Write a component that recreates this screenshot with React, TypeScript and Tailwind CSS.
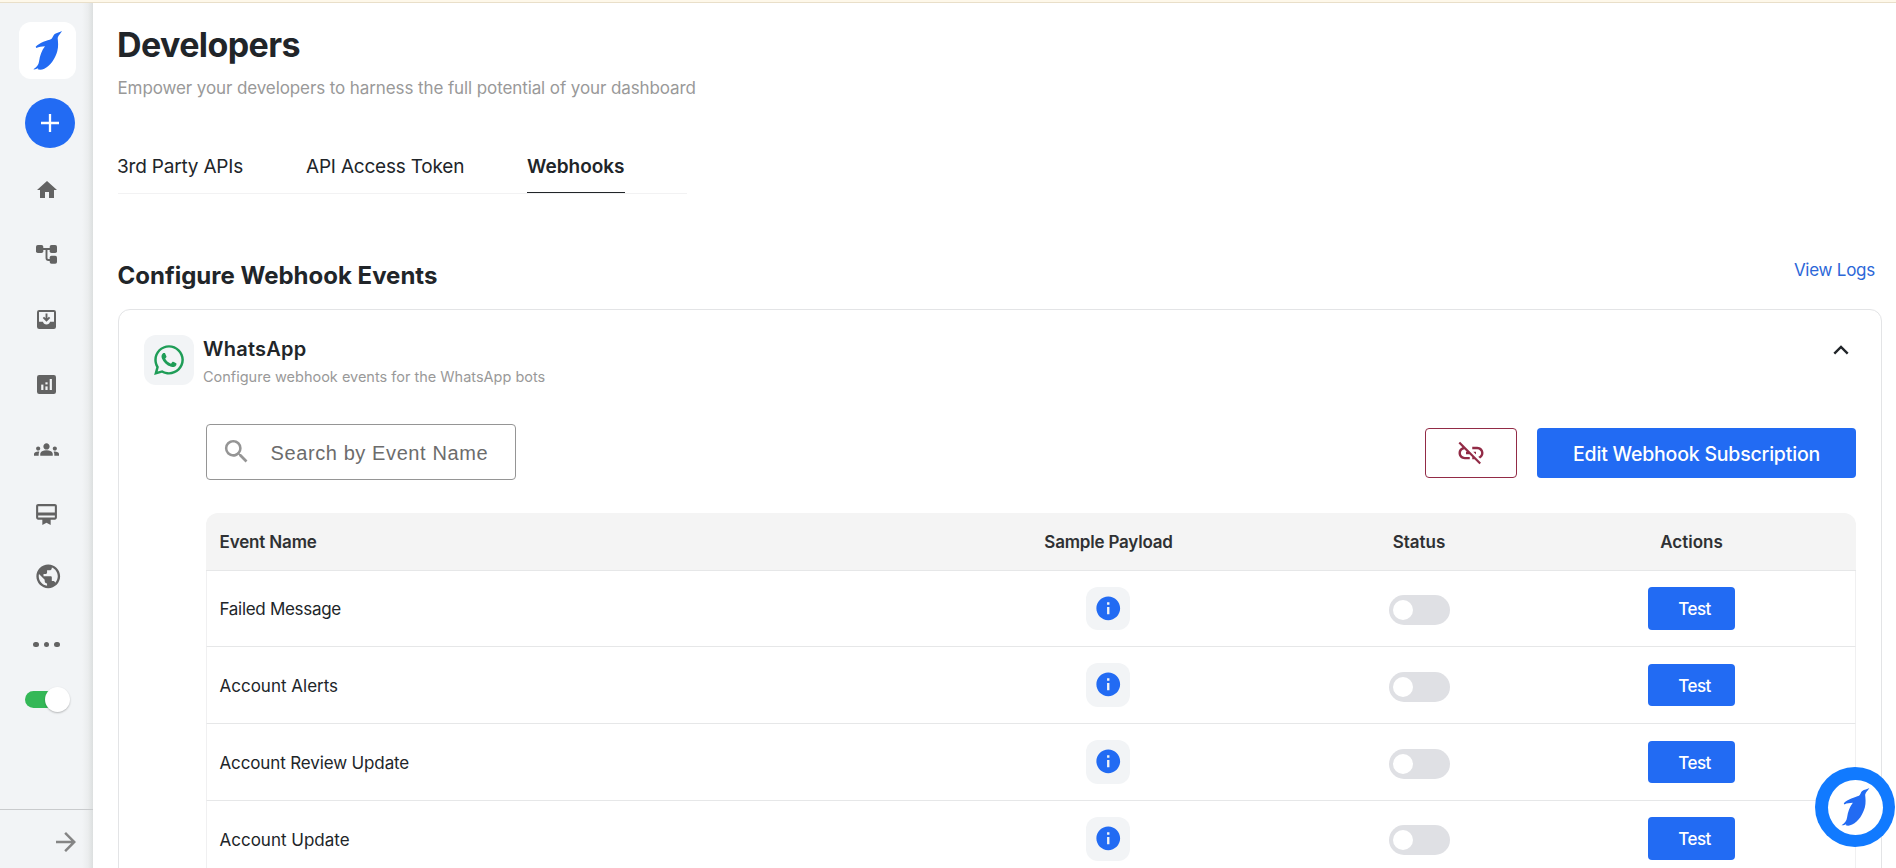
import type { ReactNode } from 'react';
import {
  MdArrowForward,
  MdCardMembership,
  MdGroups,
  MdHome,
  MdInfo,
  MdLinkOff,
  MdPublic,
  MdSearch,
} from 'react-icons/md';
import { FaWhatsapp } from 'react-icons/fa';

function Penguin({ className }: { className: string }) {
  return (
    <svg viewBox="50 36 90 122" className={className} fill="#226bf3" aria-hidden="true">
      <path d="M137 39C131 43 121 44 115 48C110 52 110 59 105 63C93 68 70 73 58 86L60 90C68 86 76 86 86 85C76 98 71 112 68 131C67 141 60 148 51 154C56 155 61 152 66 151L64 154C69 156 77 156 84 152C104 142 117 120 123 99C127 84 125 72 124 60C126 51 133 47 137 39Z" />
    </svg>
  );
}

function TreeIcon() {
  return (
    <svg viewBox="0 0 21 19" className="h-[19px] w-[21px]" fill="#636363" aria-hidden="true">
      <rect x="0" y="0" width="7.3" height="8" rx="1.8" />
      <rect x="13.7" y="0" width="7.3" height="8" rx="1.8" />
      <rect x="13.7" y="10.7" width="7.3" height="8" rx="1.8" />
      <path d="M7 4h7M10.5 4v9q0 2 2 2h1.5" fill="none" stroke="#636363" strokeWidth="1.9" />
    </svg>
  );
}

function InboxIcon() {
  return (
    <svg viewBox="0 0 19 19" className="size-[19px]" aria-hidden="true">
      <rect width="19" height="19" rx="2.2" fill="#636363" />
      <path d="M2 2h15v9.8h-4a3.6 3.6 0 0 1-7 0H2z" fill="#f2f4f6" />
      <path d="M9.5 3.6v6M6.4 7.3l3.1 3.1 3.1-3.1" fill="none" stroke="#636363" strokeWidth="1.9" />
    </svg>
  );
}

function AnalyticsIcon() {
  return (
    <svg viewBox="0 0 19 19" className="size-[19px]" aria-hidden="true">
      <rect width="19" height="19" rx="2.2" fill="#636363" />
      <g fill="#f2f4f6">
        <rect x="4.2" y="9.6" width="2.2" height="5.4" />
        <rect x="8.4" y="7.3" width="2.2" height="2.1" />
        <rect x="8.4" y="11.4" width="2.2" height="3.6" />
        <rect x="12.7" y="4" width="2.2" height="11" />
      </g>
    </svg>
  );
}

function NavItem({ children }: { children: ReactNode }) {
  return <button className="flex h-[65px] w-[93px] items-center justify-center text-[#636363]">{children}</button>;
}

function Sidebar() {
  return (
    <aside className="flex w-[93px] shrink-0 flex-col bg-[#f2f4f6] bg-[linear-gradient(to_right,transparent_82px,#ebedee_88px,#dcdfdf_93px)]">
      <div className="mt-[19px] ml-[19px] flex h-[57px] w-[57px] items-start rounded-xl bg-white pt-2 pl-[13.7px]">
        <Penguin className="h-[40.7px] w-[30px]" />
      </div>
      <button className="mt-[19px] ml-[25px] flex size-[50px] items-center justify-center rounded-full bg-[#226bf3]">
        <svg viewBox="0 0 18 18" className="size-[18px]" aria-hidden="true">
          <path d="M9 0v18M0 9h18" stroke="#fff" strokeWidth="2.3" />
        </svg>
      </button>
      <nav className="mt-[9px] flex flex-col">
        <NavItem><MdHome size={24} /></NavItem>
        <NavItem><TreeIcon /></NavItem>
        <NavItem><InboxIcon /></NavItem>
        <NavItem><AnalyticsIcon /></NavItem>
        <NavItem><MdGroups size={25} /></NavItem>
        <NavItem><MdCardMembership size={25} /></NavItem>
        <button className="flex h-[58px] w-[96px] items-center justify-center text-[#636363]">
          <MdPublic size={28.5} />
        </button>
        <button className="flex h-[79px] w-[93px] items-center justify-center gap-[4.4px]">
          <span className="size-[5.8px] rounded-full bg-[#636363]" />
          <span className="size-[5.8px] rounded-full bg-[#636363]" />
          <span className="size-[5.8px] rounded-full bg-[#636363]" />
        </button>
      </nav>
      <div className="mt-[3px] ml-[25px] flex h-[25px] w-[45px] items-center">
        <span className="h-[17px] w-[30px] shrink-0 rounded-full bg-[#34b857]" />
        <span className="-ml-[10px] size-[25px] shrink-0 rounded-full bg-white shadow-[0_1px_2px_rgba(0,0,0,0.25)]" />
      </div>
      <div className="mt-auto flex h-[59px] justify-end border-t border-[#c9cbcd] pt-[17px] pr-[12px]">
        <MdArrowForward size={30} color="#858585" />
      </div>
    </aside>
  );
}

const tabs = [
  { label: '3rd Party APIs', className: '-ml-px mr-[63px] w-[126px] tracking-[-0.2px]' },
  { label: 'API Access Token', className: 'mr-[62px] w-[159px] tracking-[-0.2px]' },
];

const events = [
  { name: 'Failed Message', row: 'h-[76px]', text: 'tracking-[-0.3px]', toggle: 'mt-6', test: 'mt-4 h-[43px]', tile: 'h-[43px]' },
  { name: 'Account Alerts', row: 'h-[77px]', text: '', toggle: 'mt-[25px]', test: 'mt-[17px] h-[42px]', tile: 'h-11' },
  { name: 'Account Review Update', row: 'h-[77px]', text: 'tracking-[-0.13px]', toggle: 'mt-[25px]', test: 'mt-[17px] h-[42px]', tile: 'h-11' },
  { name: 'Account Update', row: 'h-[77px]', text: '', toggle: 'mt-6', test: 'mt-4 h-[43px]', tile: 'h-11' },
];

function EventsTable() {
  return (
    <div className="mt-[33px] w-[1650px]">
      <div className="grid h-[58px] grid-cols-[752px_300px_322px_223px] items-center rounded-t-xl border-b border-[#e6e7e8] bg-[#f4f4f4] pt-0.5 text-[17px] font-semibold text-[#2f3133]">
        <div className="pl-[13.5px] tracking-[-0.15px]">Event Name</div>
        <div className="pl-px text-center tracking-[-0.2px]">Sample Payload</div>
        <div className="text-center">Status</div>
        <div className="text-center">Actions</div>
      </div>
      {events.map((e) => (
        <div
          key={e.name}
          className={`grid grid-cols-[751px_300px_322px_223px] border-x border-b border-x-[#f0f0f1] border-b-[#e6e7e8] ${e.row}`}
        >
          <div className={`self-center pt-px pl-[12.5px] text-[17px] leading-6 ${e.text}`}>{e.name}</div>
          <div className={`mt-4 flex w-11 justify-center justify-self-center rounded-xl bg-[#f2f4f6] pt-[7px] pl-px ${e.tile}`}>
            <MdInfo size={28.5} color="#226bf3" />
          </div>
          <div className={`flex h-[30px] w-[61px] items-center justify-self-center rounded-full bg-[#dfe0e4] pl-1 ${e.toggle}`}>
            <span className="size-5 rounded-full bg-white" />
          </div>
          <button
            className={`flex w-[87px] items-center justify-center justify-self-center rounded-[4px] bg-[#226bf3] pt-[3px] pl-[6px] text-[17px] font-medium tracking-[-0.5px] text-white ${e.test}`}
          >
            Test
          </button>
        </div>
      ))}
    </div>
  );
}

export default function App() {
  return (
    <div className="relative flex h-[868px] w-[1896px] flex-col overflow-hidden bg-white font-['Inter',sans-serif] text-[#212529]">
      <div className="h-[3px] shrink-0 border-b border-[#e9dfc9] bg-[#fef8ea]" />
      <div className="flex min-h-0 flex-1">
        <Sidebar />
        <main className="h-full min-w-0 flex-1 overflow-hidden pl-[25px]">
          <h1 className="mt-[22px] -ml-px text-[34px] leading-10 font-bold tracking-[-0.6px]">Developers</h1>
          <p className="mt-[11px] -ml-[0.5px] text-[17px] leading-6 tracking-[-0.1px] text-[#999]">
            Empower your developers to harness the full potential of your dashboard
          </p>
          <div className="mt-[52px] flex h-[42px] w-[569px] border-b border-[#f2f2f3] text-[19px] leading-7">
            {tabs.map((t) => (
              <button key={t.label} className={`shrink-0 pt-px pb-3 text-left whitespace-nowrap ${t.className}`}>
                {t.label}
              </button>
            ))}
            <button className="w-[98px] border-b border-[#212529] pt-px pb-[11px] text-left leading-7 font-semibold whitespace-nowrap">
              Webhooks
            </button>
          </div>
          <div className="mt-16 flex w-[1757px] items-start justify-between">
            <h2 className="mt-0.5 -mb-px -ml-[0.5px] text-[24px] leading-8 font-bold">Configure Webhook Events</h2>
            <a className="text-[17px] leading-6 tracking-[-0.25px] text-[#2c67d8]">View Logs</a>
          </div>
          <section className="mt-[18px] h-[700px] w-[1764px] rounded-t-xl border border-[#e3e4e6] pt-[25px]">
            <div className="flex h-[89px] items-start pr-[24px] pl-[25px]">
              <div className="flex size-[50px] items-center justify-center rounded-xl bg-[#f2f4f6]">
                <FaWhatsapp size={34} color="#1f9d57" />
              </div>
              <div className="ml-[9px] flex-1">
                <h3 className="mt-0.5 text-[20px] leading-6 font-semibold tracking-[0.25px]">WhatsApp</h3>
                <p className="mt-1.5 text-[14.5px] leading-5 text-[#999]">Configure webhook events for the WhatsApp bots</p>
              </div>
              <svg viewBox="0 0 16 10" className="mt-[10px] mr-2 h-[10px] w-4" fill="none" aria-hidden="true">
                <path d="M1.3 8.6L8 1.9L14.7 8.6" stroke="#212529" strokeWidth="2.4" />
              </svg>
            </div>
            <div className="pl-[87px]">
              <div className="flex w-[1650px] items-start">
                <div className="flex h-14 w-[310px] rounded-[4px] border border-[#959595]">
                  <MdSearch size={31} color="#959595" className="mt-[11px] ml-[13.5px] shrink-0" />
                  <input
                    className="ml-[19px] h-[54px] w-[235px] pt-0.5 font-['Liberation_Sans',sans-serif] text-[20px] tracking-[0.6px] placeholder:text-[#6c6c6c]"
                    placeholder="Search by Event Name"
                  />
                </div>
                <button className="mt-1 ml-auto flex h-[50px] w-[92px] items-center justify-center rounded-[4px] border border-[#922b46]">
                  <MdLinkOff size={30} color="#922b46" />
                </button>
                <button className="mt-1 ml-5 h-[50px] w-[319px] rounded-[4px] bg-[#226bf3] pt-1 text-[19.5px] font-medium tracking-[-0.2px] text-white">
                  Edit Webhook Subscription
                </button>
              </div>
              <EventsTable />
            </div>
          </section>
        </main>
      </div>
      <button className="absolute top-[767px] left-[1815px] flex size-20 items-center justify-center rounded-full bg-[#117aff]">
        <span className="flex size-[55px] items-center justify-center rounded-full bg-white pl-px">
          <Penguin className="h-[39.5px] w-[29.5px]" />
        </span>
      </button>
    </div>
  );
}
